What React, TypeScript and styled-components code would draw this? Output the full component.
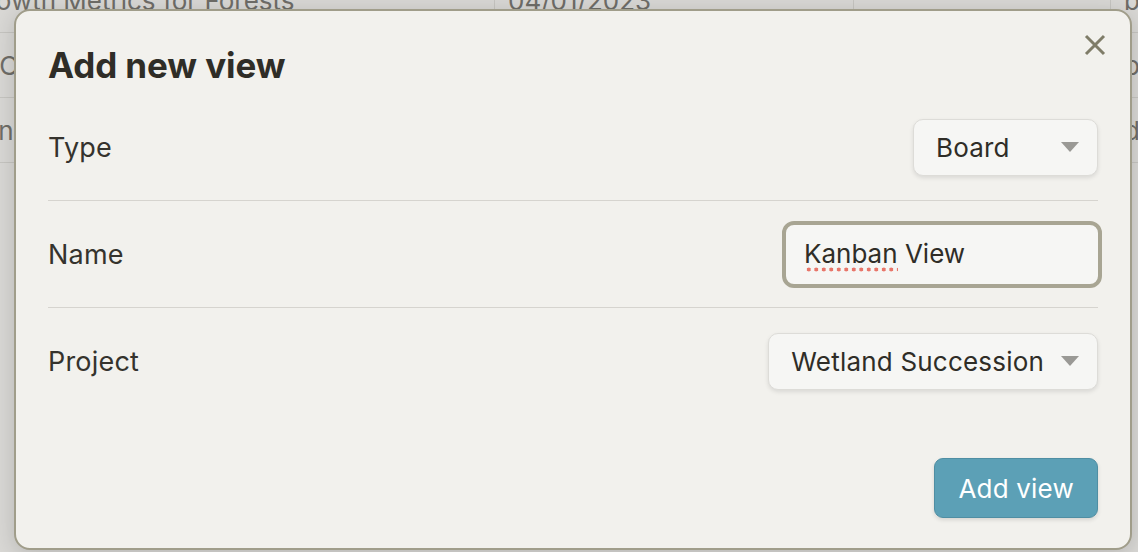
import React from "react";
import styled, { createGlobalStyle } from "styled-components";

const GlobalStyle = createGlobalStyle`
  html, body {
    margin: 0;
    padding: 0;
    height: 100%;
    overflow: hidden;
    background: #d9d8d5;
    font-family: Inter, "Noto Sans", sans-serif;
  }
  #root {
    height: 100%;
  }
`;

const rows = [
  ["Growth Metrics for Forests", "04/01/2023", "", "by"],
  ["AI Carbon Study", "", "", "b"],
  ["Ranch Soils", "", "", "d"],
];

const App: React.FC = () => {
  return (
    <>
      <GlobalStyle />
      <Page>
        <Table>
          {rows.map((row, i) => (
            <Row key={i}>
              {row.map((cell, j) => (
                <Cell key={j}>{cell}</Cell>
              ))}
            </Row>
          ))}
        </Table>

        <Modal>
          <CloseButton aria-label="Close">
            <svg width="22" height="22" viewBox="0 0 22 22">
              <path
                d="M2 2 L20 20 M20 2 L2 20"
                stroke="#7f7c68"
                strokeWidth="3"
                strokeLinecap="butt"
              />
            </svg>
          </CloseButton>

          <Title>Add new view</Title>

          <Fields>
            <FieldRow>
              <Label>Type</Label>
              <Select>
                <span>Board</span>
                <Caret />
              </Select>
            </FieldRow>
            <FieldRow>
              <Label>Name</Label>
              <NameInput>
                <InputText>
                  <Misspelled>Kanban</Misspelled> View
                </InputText>
              </NameInput>
            </FieldRow>
            <FieldRow last>
              <Label>Project</Label>
              <Select>
                <span>Wetland Succession</span>
                <Caret />
              </Select>
            </FieldRow>
          </Fields>

          <Footer>
            <PrimaryButton>Add view</PrimaryButton>
          </Footer>
        </Modal>
      </Page>
    </>
  );
};

const Page = styled.div`
  position: relative;
  width: 100%;
  height: 100%;
  overflow: hidden;
`;

const Table = styled.div`
  display: flex;
  flex-direction: column;
  margin-top: -32px;
  margin-left: -46px;
`;

const Row = styled.div`
  display: grid;
  grid-template-columns: 541px 359px 257px 200px;
  height: 65px;
  border-bottom: 1px solid #c6c5c1;
  box-sizing: border-box;
`;

const Cell = styled.div`
  display: flex;
  align-items: center;
  padding-left: 13px;
  border-right: 1px solid #c6c5c1;
  font-size: 26px;
  color: #6f6d68;
  white-space: nowrap;
  overflow: hidden;
`;

const Modal = styled.div`
  position: absolute;
  top: 9px;
  left: 14px;
  width: 1118px;
  height: 541px;
  box-sizing: border-box;
  display: flex;
  flex-direction: column;
  padding: 34px 32px 30px 32px;
  background: #f2f1ed;
  border: 2px solid #a09d8a;
  border-radius: 16px;
  box-shadow: 0 4px 22px rgba(0, 0, 0, 0.16);
  color: #2f2d27;
`;

const CloseButton = styled.button`
  position: absolute;
  top: 23px;
  right: 24px;
  width: 22px;
  height: 22px;
  padding: 0;
  border: none;
  background: none;
  display: flex;
  cursor: pointer;
`;

const Title = styled.h2`
  margin: 0;
  font-size: 35px;
  line-height: 40px;
  font-weight: 700;
  letter-spacing: -0.1px;
  color: #2f2d27;
`;

const Fields = styled.div`
  display: flex;
  flex-direction: column;
  margin-top: 9px;
`;

const FieldRow = styled.div<{ last?: boolean }>`
  display: flex;
  align-items: center;
  justify-content: space-between;
  height: ${(p) => (p.last ? "106px" : "107px")};
  box-sizing: border-box;
  border-bottom: ${(p) => (p.last ? "none" : "1px solid #d6d4cf")};
`;

const Label = styled.span`
  font-size: 27px;
  font-weight: 400;
  letter-spacing: 0.2px;
  color: #35332d;
`;

const Select = styled.div`
  display: flex;
  align-items: center;
  justify-content: space-between;
  gap: 17px;
  min-width: 185px;
  height: 57px;
  box-sizing: border-box;
  padding: 0 18px 0 22px;
  background: #f6f6f4;
  border: 1px solid #dddcd8;
  border-radius: 10px;
  box-shadow: 0 2px 4px rgba(0, 0, 0, 0.1);
  font-size: 26px;
  letter-spacing: 0.2px;
  color: #2f2d27;
`;

const Caret = styled.span`
  width: 0;
  height: 0;
  border-left: 9px solid transparent;
  border-right: 9px solid transparent;
  border-top: 10px solid #9a9995;
`;

const NameInput = styled.div`
  display: flex;
  align-items: center;
  width: 320px;
  height: 67px;
  box-sizing: border-box;
  margin-right: -4px;
  padding-left: 18px;
  background: #f6f6f4;
  border: 4px solid #a8a593;
  border-radius: 12px;
  font-size: 26px;
  color: #2f2d27;
`;

const InputText = styled.span`
  white-space: pre;
  line-height: 32px;
`;

const Misspelled = styled.span`
  padding-bottom: 3px;
  background-image: radial-gradient(circle, #e8766a 1.8px, transparent 2.2px);
  background-size: 7.5px 5px;
  background-repeat: repeat-x;
  background-position: 1px 100%;
`;

const Footer = styled.div`
  display: flex;
  justify-content: flex-end;
  margin-top: auto;
`;

const PrimaryButton = styled.button`
  height: 60px;
  padding: 0 23px;
  background: #5ca0b6;
  border: 1px solid #4f8ea3;
  border-radius: 9px;
  box-shadow: 0 2px 4px rgba(0, 0, 0, 0.12);
  font-family: Inter, "Noto Sans", sans-serif;
  font-size: 26px;
  letter-spacing: 0.2px;
  color: #ffffff;
  cursor: pointer;
`;

export default App;
